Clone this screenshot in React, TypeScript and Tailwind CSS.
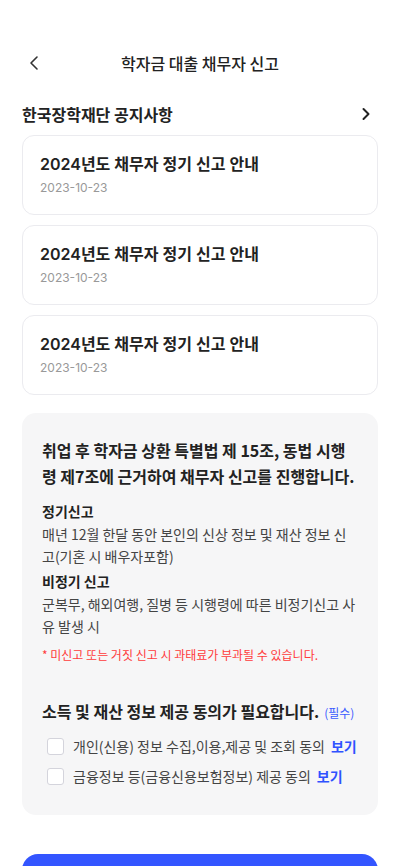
import { ChevronLeft, ChevronRight } from "lucide-react";

type NoticeProps = {
  title: string;
  date: string;
};

function NoticeCard({ title, date }: NoticeProps) {
  return (
    <div className="h-[80px] bg-white border border-[#ebebef] rounded-[12px] px-[17px] pt-[16px] font-[Inter,'Noto_Sans_CJK_KR',sans-serif]">
      <div className="text-[16px] leading-[24px] font-semibold text-[#222]">{title}</div>
      <div className="text-[12px] leading-[18px] text-[#999] mt-[3px]">{date}</div>
    </div>
  );
}

function AgreeRow({ label }: { label: string }) {
  return (
    <div className="flex items-center h-[30px] whitespace-nowrap">
      <div className="shrink-0 w-[17px] h-[17px] border border-[#d4d4dc] rounded-[3px] bg-white ml-[5px]" />
      <span className="ml-[9px] text-[14px] text-[#444]">{label}</span>
      <span className="ml-[6px] text-[14px] font-semibold text-[#2f52ff]">보기</span>
    </div>
  );
}

export default function App() {
  const notices = [
    { title: "2024년도 채무자 정기 신고 안내", date: "2023-10-23" },
    { title: "2024년도 채무자 정기 신고 안내", date: "2023-10-23" },
    { title: "2024년도 채무자 정기 신고 안내", date: "2023-10-23" },
  ];

  return (
    <div
      className="w-[400px] h-[866px] bg-white overflow-hidden"
      style={{ fontFamily: '"Noto Sans CJK KR", "Noto Sans", sans-serif' }}
    >
      {/* Header */}
      <div className="relative h-[48px] mt-[39px] flex items-center justify-center">
        <ChevronLeft className="absolute left-[22px] top-[12px] w-[24px] h-[24px] text-[#333]" strokeWidth={1.6} />
        <div className="text-[16px] font-medium text-[#222]">학자금 대출 채무자 신고</div>
      </div>

      {/* Notices */}
      <div className="px-[22px]">
        <div className="flex items-center justify-between h-[30px] mt-[12px]">
          <div className="text-[16px] font-semibold text-[#222]">한국장학재단 공지사항</div>
          <ChevronRight className="w-[20px] h-[20px] text-[#222] mr-[2px]" strokeWidth={2.4} />
        </div>

        <div className="flex flex-col gap-[10px] mt-[6px]">
          {notices.map((n, i) => (
            <NoticeCard key={i} title={n.title} date={n.date} />
          ))}
        </div>

        {/* Info box */}
        <div className="mt-[18px] h-[402px] bg-[#f6f6f7] rounded-[14px] px-[20px] pt-[24px]">
          <div className="text-[16px] leading-[26px] font-semibold text-[#222]">
            취업 후 학자금 상환 특별법 제 15조, 동법 시행령 제7조에 근거하여 채무자 신고를 진행합니다.
          </div>

          <div className="mt-[11px] text-[14px] leading-[22px] font-semibold text-[#222]">정기신고</div>
          <div className="mt-[1px] text-[14px] leading-[22px] text-[#444]">
            매년 12월 한달 동안 본인의 신상 정보 및 재산 정보 신고(기혼 시 배우자포함)
          </div>

          <div className="mt-[3px] text-[14px] leading-[22px] font-semibold text-[#222]">비정기 신고</div>
          <div className="mt-[1px] text-[14px] leading-[22px] text-[#444]">
            군복무, 해외여행, 질병 등 시행령에 따른 비정기신고 사유 발생 시
          </div>

          <div className="mt-[9px] text-[12px] leading-[18px] text-[#ff3b3b]">
            * 미신고 또는 거짓 신고 시 과태료가 부과될 수 있습니다.
          </div>

          <div className="mt-[35px] flex items-baseline h-[24px]">
            <span className="text-[16px] font-bold text-[#222]">소득 및 재산 정보 제공 동의가 필요합니다.</span>
            <span className="ml-[5px] text-[12px] text-[#3b5bff]">(필수)</span>
          </div>

          <div className="mt-[8px] flex flex-col">
            <AgreeRow label="개인(신용) 정보 수집,이용,제공 및 조회 동의" />
            <AgreeRow label="금융정보 등(금융신용보험정보) 제공 동의" />
          </div>
        </div>

        {/* Button */}
        <div className="mt-[39px] h-[56px] rounded-[16px] bg-[#3355ff]" />
      </div>
    </div>
  );
}
